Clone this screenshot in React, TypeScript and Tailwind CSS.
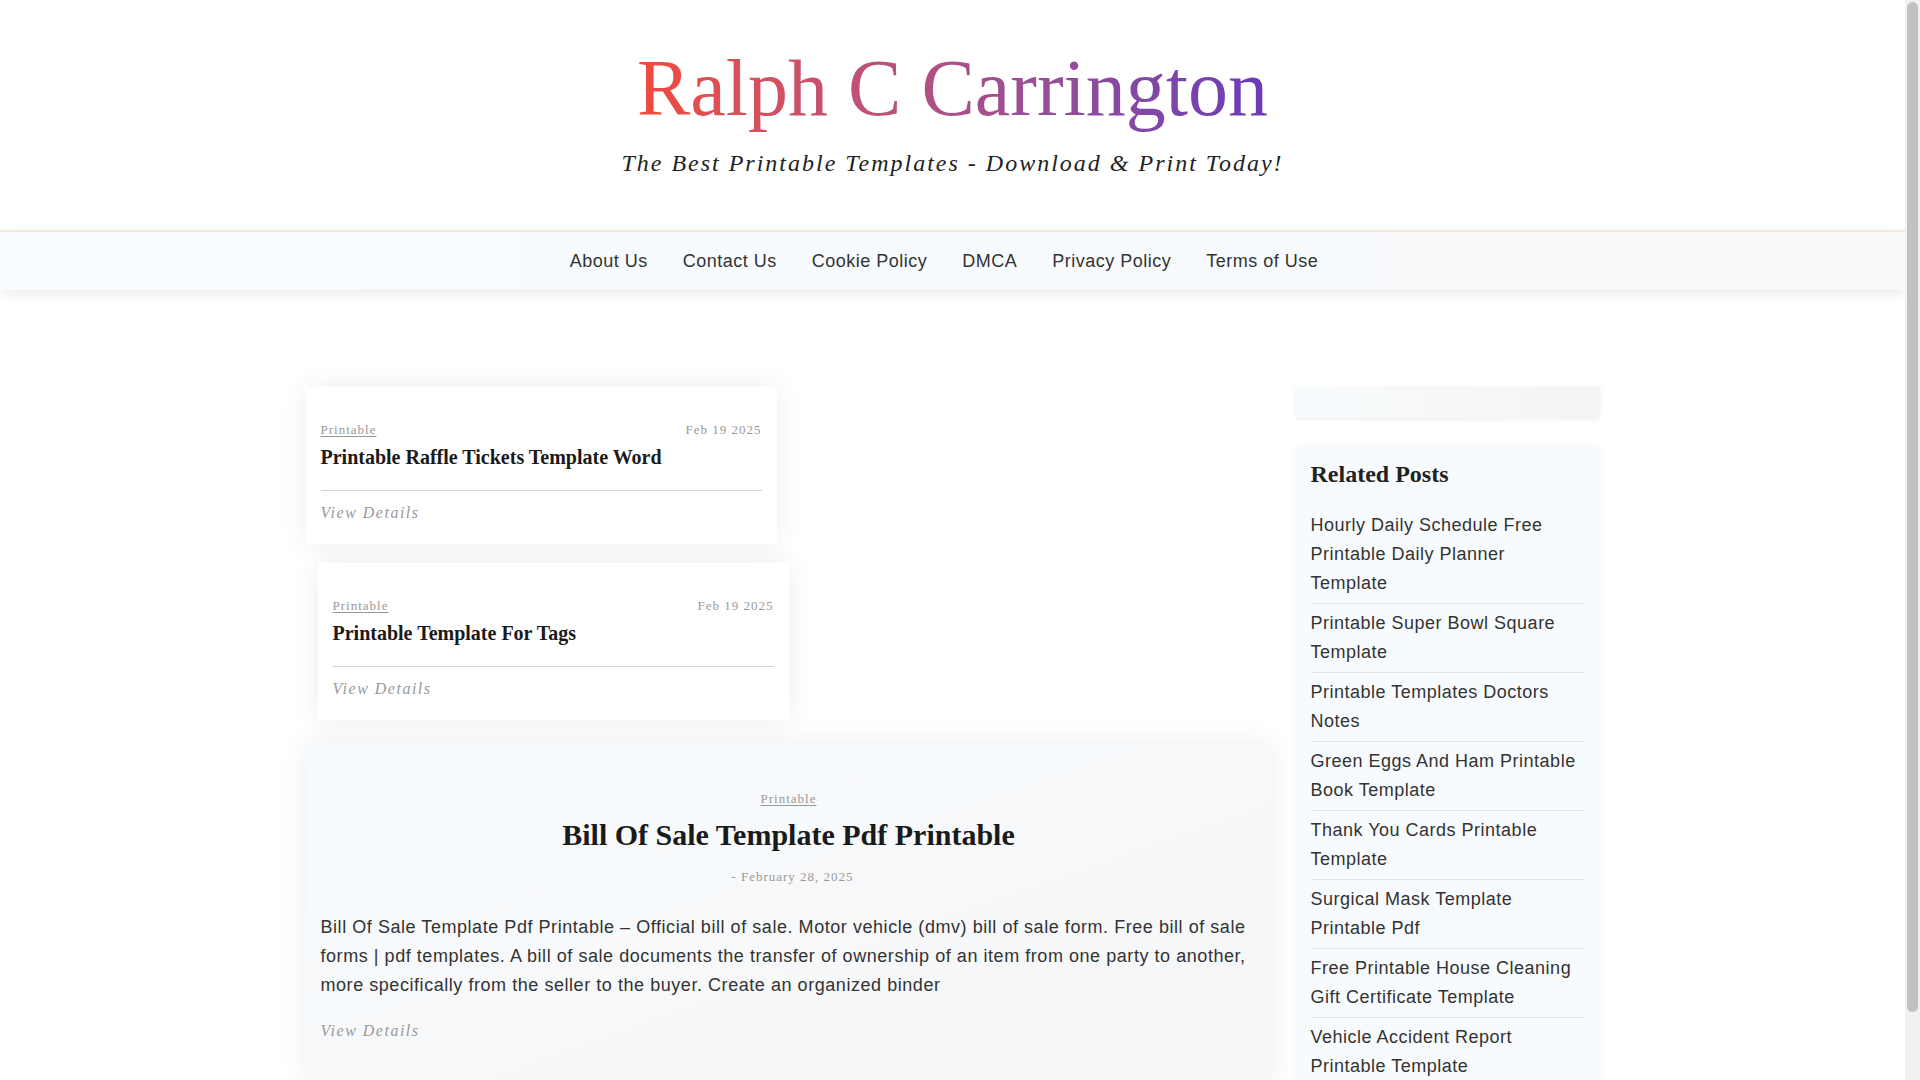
const navItems = ["About Us", "Contact Us", "Cookie Policy", "DMCA", "Privacy Policy", "Terms of Use"]

const related = [
  "Hourly Daily Schedule Free Printable Daily Planner Template",
  "Printable Super Bowl Square Template",
  "Printable Templates Doctors Notes",
  "Green Eggs And Ham Printable Book Template",
  "Thank You Cards Printable Template",
  "Surgical Mask Template Printable Pdf",
  "Free Printable House Cleaning Gift Certificate Template",
  "Vehicle Accident Report Printable Template",
  "Printable Shipping Label Template",
]

const serif = "font-['Liberation_Serif','Times_New_Roman',serif]"
const sans = "font-['Liberation_Sans',Arial,sans-serif]"

function SmallCard({ title, offset }: { title: string; offset?: boolean }) {
  return (
    <div
      className={`w-[471px] bg-white px-[15px] pt-[35px] pb-[20px] shadow-[0_0_28px_rgba(0,0,0,0.07)] ${
        offset ? "ml-[12px]" : ""
      }`}
    >
      <div className={`flex items-center justify-between text-[13px] leading-[16px] tracking-[1px] text-[#999] ${serif}`}>
        <a className="underline underline-offset-2">Printable</a>
        <span>Feb 19 2025</span>
      </div>
      <h2 className={`mt-[5px] text-[20px] leading-[28px] font-bold text-[#1a1a1a] ${serif}`}>{title}</h2>
      <div className="mt-[19px] border-t border-[#d0d0d0]" />
      <div className={`mt-[11px] text-[16px] leading-[22px] italic tracking-[1.5px] text-[#999] ${serif}`}>
        View Details
      </div>
    </div>
  )
}

export default function App() {
  return (
    <div className="flex h-screen overflow-hidden bg-white">
      <div className="min-w-0 flex-1 overflow-hidden">
        {/* Header */}
        <header className="flex flex-col items-center pt-[40px] pb-[52px]">
          <h1
            className={`text-[80px] leading-[96px] bg-gradient-to-r from-[#f04a3a] to-[#6a3bb9] bg-clip-text text-transparent ${serif}`}
          >
            Ralph C Carrington
          </h1>
          <p className={`mt-[13px] text-[24px] leading-[29px] italic tracking-[2px] text-[#222] ${serif}`}>
            The Best Printable Templates - Download &amp; Print Today!
          </p>
        </header>

        {/* Nav */}
        <nav className="h-[60px] border-t-2 border-[#efe9e0] bg-gradient-to-r from-[#f7fcfe] to-[#f8f9fb] shadow-[0_4px_12px_rgba(0,0,0,0.08)]">
          <ul className={`flex h-full items-center justify-center pr-[17px] ${sans}`}>
            {navItems.map((item) => (
              <li key={item} className="px-[17.5px] text-[18px] tracking-[0.5px] text-[#333]">
                {item}
              </li>
            ))}
          </ul>
        </nav>

        {/* Main */}
        <main className="mx-auto flex w-[1294px] items-start gap-[24px] pt-[97px] pb-[60px]">
          <div className="flex w-[966px] flex-col">
            <SmallCard title="Printable Raffle Tickets Template Word" />
            <div className="mt-[19px]">
              <SmallCard title="Printable Template For Tags" offset />
            </div>

            <article className="mt-[24px] bg-gradient-to-br from-[#f8fbfd] to-[#f5f6f8] px-[15px] pt-[47px] pb-[40px] shadow-[0_0_28px_rgba(0,0,0,0.07)]">
              <div className="flex flex-col items-center">
                <a className={`text-[13px] leading-[16px] tracking-[1px] text-[#999] underline underline-offset-2 ${serif}`}>
                  Printable
                </a>
                <h2 className={`mt-[8px] text-[30px] leading-[40px] font-bold text-[#1a1a1a] ${serif}`}>
                  Bill Of Sale Template Pdf Printable
                </h2>
                <div className={`mt-[14px] ml-[8px] text-[13px] leading-[16px] tracking-[1px] text-[#999] ${serif}`}>
                  - February 28, 2025
                </div>
              </div>
              <p className={`mt-[28px] text-[18px] leading-[29px] tracking-[0.55px] text-[#333] ${sans}`}>
                Bill Of Sale Template Pdf Printable – Official bill of sale. Motor vehicle (dmv) bill of sale form. Free
                bill of sale forms | pdf templates. A bill of sale documents the transfer of ownership of an item from one
                party to another, more specifically from the seller to the buyer. Create an organized binder
              </p>
              <div className={`mt-[20px] text-[16px] leading-[22px] italic tracking-[1.5px] text-[#999] ${serif}`}>
                View Details
              </div>
            </article>
          </div>

          {/* Sidebar */}
          <aside className="flex w-[304px] flex-col gap-[27px]">
            <div className="h-[31px] rounded-[4px] bg-gradient-to-r from-[#f8fbfd] to-[#f4f4f5] shadow-[0_1px_4px_rgba(0,0,0,0.08)]" />
            <div className="rounded-[4px] bg-[#f8fbfd] px-[15px] pt-[14px] pb-[10px] shadow-[0_0_6px_rgba(0,0,0,0.04)]">
              <h3 className={`text-[24px] leading-[30px] font-bold text-[#222] ${serif}`}>Related Posts</h3>
              <ul className={`mt-[17px] ${sans}`}>
                {related.map((r, i) => (
                  <li
                    key={r}
                    className={`py-[5px] text-[18px] leading-[29px] tracking-[0.5px] text-[#333] ${
                      i > 0 ? "border-t border-[#e6e6e6]" : ""
                    }`}
                  >
                    {r}
                  </li>
                ))}
              </ul>
            </div>
          </aside>
        </main>
      </div>

      {/* Scrollbar */}
      <div className="flex w-[15px] shrink-0 flex-col bg-[#f1f1f1] px-[2px] pt-[2px]">
        <div className="h-[1010px] rounded-[6px] bg-[#c1c1c1]" />
      </div>
    </div>
  )
}
